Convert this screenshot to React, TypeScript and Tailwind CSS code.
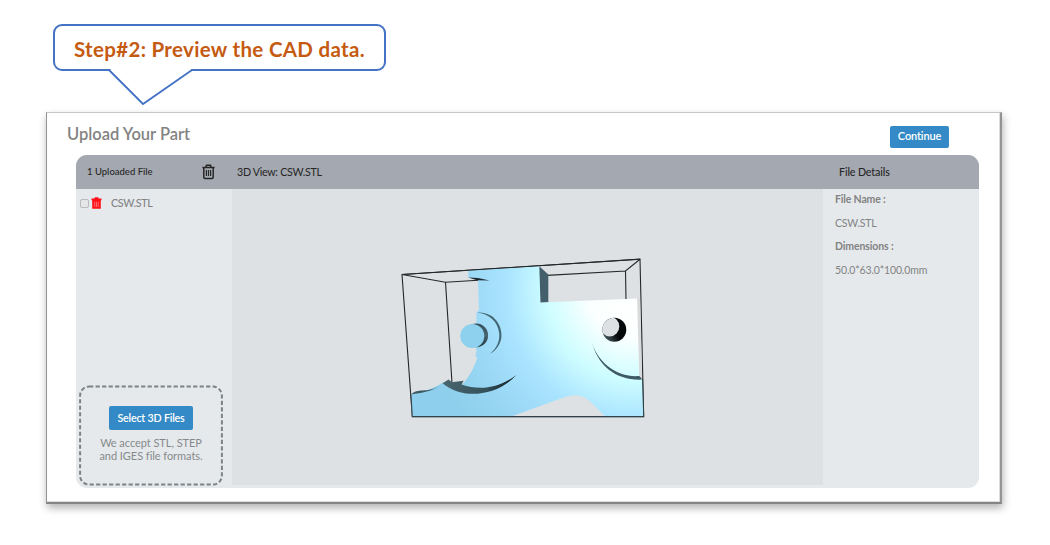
import type { ReactNode } from "react";

function TrashIcon({ className }: { className: string }) {
  return (
    <svg className={className} viewBox="0 0 13 16" fill="none" stroke="currentColor" strokeWidth="1.5">
      <path d="M0.4 3.4H12.6M4 3.2L4.5 1.2H8.5L9 3.2M1.8 3.6V13.3Q1.8 14.4 3 14.4H10Q11.2 14.4 11.2 13.3V3.6" />
      <path d="M4.4 6V12M6.5 6V12M8.6 6V12" strokeWidth="1.2" />
    </svg>
  );
}

function SolidTrashIcon() {
  return (
    <svg className="ml-[2px] h-[12px] w-[11px]" viewBox="0 0 11 12">
      <path d="M0.5 1.6H3.4L3.8 0.3H7.2L7.6 1.6H10.5V3.2H0.5ZM1.2 3.2H9.8V11.8H1.2Z" fill="#ff1018" />
      <path d="M3.8 4.8V10M5.5 4.8V10M7.2 4.8V10" stroke="#ff8d90" strokeWidth="0.7" />
    </svg>
  );
}

function BlueButton({ className, children }: { className: string; children: ReactNode }) {
  return (
    <button className={`flex shrink-0 items-center justify-center whitespace-nowrap bg-[#338ac6] font-semibold text-white ${className}`}>
      {children}
    </button>
  );
}

function PartModel() {
  return (
    <svg className="ml-[163px] mt-[61px] h-[175px] w-[255px]" viewBox="395 250 255 175">
      <defs>
        <radialGradient id="skin" gradientUnits="userSpaceOnUse" cx="636" cy="290" r="215">
          <stop offset="0" stopColor="#ffffff" />
          <stop offset="0.22" stopColor="#fcffff" />
          <stop offset="0.42" stopColor="#cdfdff" />
          <stop offset="0.6" stopColor="#aae4ff" />
          <stop offset="0.8" stopColor="#99d7f4" />
          <stop offset="1" stopColor="#8dcfec" />
        </radialGradient>
        <linearGradient id="shade" x1="0" y1="0" x2="1" y2="0">
          <stop offset="0" stopColor="#49666f" />
          <stop offset="0.6" stopColor="#34505a" />
          <stop offset="1" stopColor="#10191d" />
        </linearGradient>
        <linearGradient id="boss" x1="0" y1="0" x2="0" y2="1">
          <stop offset="0" stopColor="#34505a" />
          <stop offset="0.5" stopColor="#48646e" />
          <stop offset="1" stopColor="#22343b" />
        </linearGradient>
        <linearGradient id="bore" x1="0" y1="0.8" x2="0.8" y2="0.3">
          <stop offset="0" stopColor="#4b626b" />
          <stop offset="0.6" stopColor="#06090a" />
        </linearGradient>
        <clipPath id="holeClip"><circle cx="614.3" cy="329.7" r="12" /></clipPath>
      </defs>
      <g fill="none" stroke="#242829" strokeWidth="1.1">
        <path d="M402 274.5L640 259.2L643.7 416.6H412.3Z" />
        <path d="M402 274.5L445.5 282.2L478 280.2M445.5 282.2L452 383M547 275.4L625.5 271L640 259.2M625.5 271L626 300" />
      </g>
      <path d="M637 298.4L640 298.4L642 379L639 378Z" fill="#d9dadb" />
      <path d="M468.3 270.6L540 266.3L540.5 302.5L637 298.4L639.3 378L642.5 379.5L643.4 416.2H605L594 405C584 395 577 393.5 565 397L512 416.2H412L411 394.5Q430 391 444 382L463 383.5Q472 374 477.5 357.5L475.5 357L476.4 351V313L479 309.5L478 280L468.3 277.5Z" fill="url(#skin)" />
      <path d="M468.3 277.6L478 277.9L489.5 280.6L477 280.2Z" fill="#1d2b31" />
      <path d="M539.3 266.3L548.3 274.5V302L540.5 302.6Z" fill="#425f6b" />
      <circle cx="476.2" cy="335.4" r="11.9" fill="url(#boss)" />
      <circle cx="472.3" cy="336" r="12" fill="#8dd1ef" />
      <path d="M476.8 312.6C494 311 503 326 501.3 338C500 345 496 350.5 490 353.7C497 348 500 341 499.2 333C498 322 489 313.5 476.8 312.6Z" fill="#426673" />
      <path d="M411.3 394.2C415 390.5 421 390.5 427 390.3C432 389.5 437 388 440 385.8C433 391 421 393 411.3 394.4Z" fill="#3b5964" />
      <path d="M442.6 383.3L448.5 379.5L452 382.2L463.6 380.7L461.5 384.5C480 391 499 388 516.3 375C501 392 477 397 459 392C451 389.5 446 386 442.6 383.3Z" fill="url(#shade)" />
      <circle cx="614.3" cy="329.7" r="12" fill="url(#bore)" />
      <ellipse cx="609.8" cy="326.6" rx="9.5" ry="9.9" fill="#dde1e4" clipPath="url(#holeClip)" />
      <path d="M591.3 339.5C596 363 619 378 639.2 376.1L642.5 379.6C618 381 597 367 591.3 339.5Z" fill="#3e5a65" />
      <path d="M411 394.5L412.3 416.6H643.7L642.5 379" fill="none" stroke="#30434b" strokeWidth="1" />
      <path d="M402 274.5L640 259.2" fill="none" stroke="#242829" strokeWidth="1" />
    </svg>
  );
}

function Callout() {
  return (
    <div className="relative ml-[53px] flex h-[47px] w-[333px] items-center rounded-[9px] border-2 border-[#4472c4] bg-white pl-[19px] pt-[4px]">
      <span className="whitespace-nowrap text-[20.5px] font-bold tracking-[0.32px] text-[#c55a11]">Step#2: Preview the CAD data.</span>
      <svg className="absolute left-[52px] top-[42px] h-[38px] w-[88px]" viewBox="0 0 88 38">
        <path d="M3.5 0H84V4H3.5Z" fill="#fff" />
        <path d="M2 2L36 36L85 2" fill="none" stroke="#4472c4" strokeWidth="1.8" />
      </svg>
    </div>
  );
}

export default function App() {
  return (
    <main className="flex h-[545px] w-[1050px] flex-col overflow-hidden bg-white pt-6 font-['Lato',sans-serif]">
      <Callout />
      <section className="ml-[46px] mt-[41px] flex h-[392px] w-[956px] flex-col border-b-2 border-l border-r-2 border-t border-b-[#858585] border-l-[#929292] border-r-[#939393] border-t-[#c6c6c6] bg-white shadow-[1px_4px_8px_rgba(0,0,0,0.3),inset_-1px_-1px_0_#dcdcdc]">
        <div className="flex h-[42px] shrink-0 justify-between pl-[20px] pr-[51px]">
          <h1 className="mt-[9px] whitespace-nowrap text-[16.5px] font-semibold leading-6 text-[#838383]">Upload Your Part</h1>
          <BlueButton className="mt-[13px] h-[22px] w-[59px] rounded-[2px] pb-[1px] text-[11px] tracking-[-0.15px]">Continue</BlueButton>
        </div>
        <div className="ml-[29px] flex h-[333px] w-[903px] flex-col overflow-hidden rounded-[11px] bg-[#e5e9ec]">
          <header className="flex h-[34px] shrink-0 items-center bg-[#a4a8b0] text-[10.7px] text-[#262626]">
            <div className="flex w-[156px] items-center justify-between pl-[11px] pr-[17px]">
              <span className="whitespace-nowrap text-[9.5px] font-medium">1 Uploaded File</span>
              <TrashIcon className="-mt-[1px] h-[16px] w-[13px]" />
            </div>
            <span className="w-[591px] pl-[5px] tracking-[-0.3px]">3D View: CSW.STL</span>
            <span className="pl-[16px] font-medium tracking-[-0.12px]">File Details</span>
          </header>
          <div className="flex min-h-0 flex-1">
            <aside className="flex w-[156px] shrink-0 flex-col justify-between">
              <div className="flex h-[28px] items-center pl-[4px]">
                <span className="h-[9px] w-[9px] rounded-[2px] border border-[#b8bcbe] bg-[#e5e6e7]" />
                <SolidTrashIcon />
                <span className="ml-[9px] text-[10.7px] font-medium tracking-[-0.3px] text-[#838383]">CSW.STL</span>
              </div>
              <div className="relative mb-[2px] ml-[3px] flex h-[101px] w-[144px] flex-col items-center pt-[21px]">
                <svg className="absolute inset-0 h-full w-full" viewBox="0 0 144 101">
                  <rect x="1.1" y="1.6" width="141.8" height="98" rx="9" fill="none" stroke="#7d8285" strokeWidth="2" strokeDasharray="4.2 2.3" />
                </svg>
                <BlueButton className="h-[24px] w-[84px] rounded-[2px] text-[10.7px] tracking-[-0.2px]">Select 3D Files</BlueButton>
                <p className="mt-[6px] whitespace-nowrap text-center text-[11px] leading-[13px] tracking-[-0.05px] text-[#85898b]">We accept STL, STEP<br />and IGES file formats.</p>
              </div>
            </aside>
            <div className="mb-[3px] w-[591px] shrink-0 bg-[#dde1e4]">
              <PartModel />
            </div>
            <dl className="-mt-[1px] flex flex-col pl-[12px] text-[10.5px] leading-[23.6px] text-[#838383]">
              <dt className="font-bold tracking-[-0.15px]">File Name :</dt>
              <dd className="tracking-[-0.2px]">CSW.STL</dd>
              <dt className="font-bold tracking-[-0.12px]">Dimensions :</dt>
              <dd className="tracking-[-0.14px]">50.0*63.0*100.0mm</dd>
            </dl>
          </div>
        </div>
      </section>
    </main>
  );
}
